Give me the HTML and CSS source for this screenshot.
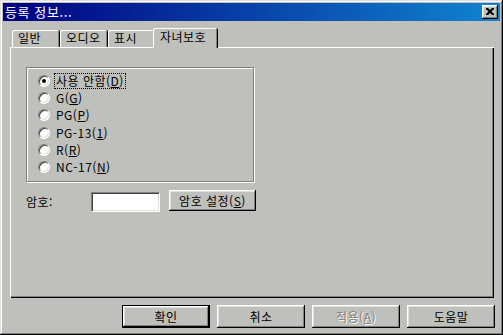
FILE: index.html
```html
<!DOCTYPE html>
<html lang="ko">
<head>
<meta charset="utf-8">
<link rel="stylesheet" href="styles.css">
</head>
<body>
<div class="window">
  <div class="titlebar">
    <span class="title">등록 정보...</span>
    <span class="close"><svg width="8" height="7" viewBox="0 0 8 7"><path d="M0 0h2l2 2 2-2h2v1l-2.5 2.5L8 6v1H6L4 5 2 7H0V6l2.5-2.5L0 1z" fill="#000"/></svg></span>
  </div>
  <div class="tabs">
    <div class="tab t1">일반</div>
    <div class="tab t2">오디오</div>
    <div class="tab t3">표시</div>
    <div class="tab sel">자녀보호</div>
  </div>
  <div class="panel">
    <div class="group">
      <div class="opt"><span class="radio on"></span><span class="lbl focus">사용 안함(<u>D</u>)</span></div>
      <div class="opt"><span class="radio"></span><span class="lbl">G(<u>G</u>)</span></div>
      <div class="opt"><span class="radio"></span><span class="lbl">PG(<u>P</u>)</span></div>
      <div class="opt"><span class="radio"></span><span class="lbl">PG-13(<u>1</u>)</span></div>
      <div class="opt"><span class="radio"></span><span class="lbl">R(<u>R</u>)</span></div>
      <div class="opt"><span class="radio"></span><span class="lbl">NC-17(<u>N</u>)</span></div>
    </div>
    <div class="pwrow">
      <span class="pwlabel">암호:</span>
      <span class="input"></span>
      <span class="btn setbtn">암호 설정(<u>S</u>)</span>
    </div>
  </div>
  <div class="buttons">
    <span class="btn b default">확인</span>
    <span class="btn b">취소</span>
    <span class="btn b disabled">적용(<u>A</u>)</span>
    <span class="btn b">도움말</span>
  </div>
</div>
</body>
</html>
```
FILE: styles.css
```css
* { box-sizing: border-box; }
html, body { margin: 0; padding: 0; background: #bfbfbb; }
body {
  font-family: "Noto Sans CJK KR", "Noto Sans", sans-serif;
  font-size: 12px;
  letter-spacing: 0.5px;
  color: #000;
}
u { text-decoration: underline; text-underline-offset: 1px; }
.window {
  width: 503px;
  height: 335px;
  padding: 3px;
  background: #bfbfbb;
  box-shadow: inset -1px -1px 0 #000, inset 1px 1px 0 #dfdfdf, inset -2px -2px 0 #808080, inset 2px 2px 0 #fff;
  display: flex;
  flex-direction: column;
}
.titlebar {
  height: 18px;
  background: linear-gradient(to right, #000080, #1084d0);
  display: flex;
  align-items: center;
  justify-content: space-between;
  padding: 0 2px 0 2px;
}
.title {
  color: #fff;
  font-size: 13px;
  line-height: 18px;
  font-weight: normal;
  letter-spacing: 0.6px;
}
.close {
  width: 16px;
  height: 14px;
  background: #bfbfbb;
  box-shadow: inset -1px -1px 0 #000, inset 1px 1px 0 #fff, inset -2px -2px 0 #808080, inset 2px 2px 0 #dfdfdf;
  display: flex;
  align-items: center;
  justify-content: center;
  padding-bottom: 1px;
}
.tabs {
  display: flex;
  align-items: flex-end;
  margin: 7px 0 0 9px;
  height: 19px;
  position: relative;
  z-index: 2;
}
.tab {
  height: 17px;
  line-height: 16px;
  padding: 0 0 0 6px;
  border-radius: 2px 2px 0 0;
  box-shadow: inset 1px 1px 0 #fff, inset -1px 0 0 #808080, 1px 0 0 #000;
  background: #bfbfbb;
}
.t1 { width: 47px; margin-right: 1px; }
.t2 { width: 47px; margin-right: 1px; }
.t3 { width: 46px; }
.sel {
  width: 64px;
  height: 20px;
  margin: 0 0 -1px -1px;
  padding-left: 7px;
  line-height: 18px;
}
.panel {
  margin-left: 7px;
  width: 484px;
  height: 251px;
  box-shadow: inset 1px 1px 0 #fff, inset -1px -1px 0 #000, inset -2px -2px 0 #808080;
  padding: 20px 0 0 16px;
  position: relative;
  z-index: 1;
}
.group {
  width: 228px;
  height: 115px;
  border: 1px solid #808080;
  box-shadow: 1px 1px 0 #fff, inset 1px 1px 0 #fff;
  padding: 4px 0 0 11px;
}
.opt {
  height: 17.35px;
  display: flex;
  align-items: center;
}
.radio {
  width: 12px;
  height: 12px;
  border-radius: 50%;
  background: #fff;
  border: 1px solid;
  border-color: #808080 #fff #fff #808080;
  box-shadow: inset 1px 1px 0 #404040, inset -1px -1px 0 #dfdfdf;
  position: relative;
  flex: none;
}
.radio.on::after {
  content: "";
  position: absolute;
  left: 3px;
  top: 3px;
  width: 4px;
  height: 4px;
  border-radius: 50%;
  background: #000;
}
.lbl {
  margin-left: 5px;
  line-height: 14px;
  padding: 0 1px;
}
.focus { outline: 1px dotted #000; outline-offset: 0; }
.pwrow {
  display: flex;
  align-items: center;
  margin-top: 8px;
  height: 22px;
}
.pwlabel { width: 65px; }
.input {
  width: 69px;
  height: 20px;
  background: #fff;
  border: 1px solid;
  border-color: #808080 #fff #fff #808080;
  box-shadow: inset 1px 1px 0 #404040, inset -1px -1px 0 #dfdfdf;
  margin-top: 2px;
}
.btn {
  background: #bfbfbb;
  box-shadow: inset -1px -1px 0 #000, inset 1px 1px 0 #fff, inset -2px -2px 0 #808080, inset 2px 2px 0 #dfdfdf;
  display: flex;
  align-items: center;
  justify-content: center;
}
.setbtn {
  width: 87px;
  height: 21px;
  margin-left: 9px;
  margin-top: -1px;
}
.buttons {
  display: flex;
  justify-content: flex-end;
  margin-top: 7px;
  padding-right: 5px;
  gap: 7px;
}
.b { width: 88px; height: 23px; }
.default {
  box-shadow: inset 0 0 0 1px #000, inset -2px -2px 0 #000, inset 2px 2px 0 #fff, inset -3px -3px 0 #808080, inset 3px 3px 0 #dfdfdf;
}
.disabled { color: #808080; text-shadow: 1px 1px 0 #fff; }
```
